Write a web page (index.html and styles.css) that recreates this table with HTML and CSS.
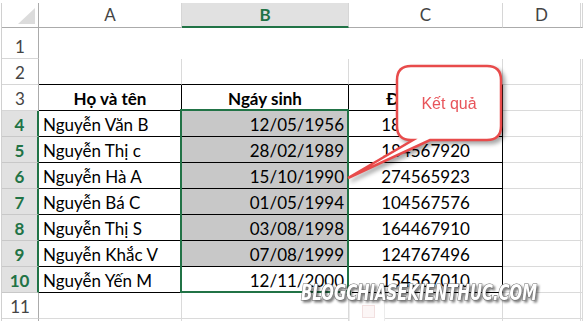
FILE: index.html
```html
<!DOCTYPE html>
<html>
<head>
<meta charset="utf-8">
<link rel="stylesheet" href="styles.css">
</head>
<body>
<div class="page">
  <div class="sheet">
    <div class="row hdr">
      <div class="corner"><span class="tri"></span></div>
      <div class="ch">A</div>
      <div class="ch sel">B</div>
      <div class="ch">C</div>
      <div class="ch">D</div>
      <div class="ch"></div>
    </div>
    <div class="row r1">
      <div class="rh">1</div>
      <div class="c blank"></div><div class="c blank"></div><div class="c blank"></div><div class="c blank"></div><div class="c blank"></div>
    </div>
    <div class="row">
      <div class="rh">2</div>
      <div class="c top"></div><div class="c top"></div><div class="c top"></div><div class="c"></div><div class="c"></div>
    </div>
    <div class="row">
      <div class="rh">3</div>
      <div class="c tb bold center">Họ và tên</div>
      <div class="c tb bold center">Ngáy sinh</div>
      <div class="c tb bold center">Điện thoại</div>
      <div class="c"></div><div class="c"></div>
    </div>
    <div class="row">
      <div class="rh sel">4</div>
      <div class="c tb name">Nguyễn Văn B</div>
      <div class="c tb date fill">12/05/1956</div>
      <div class="c tb center">184567890</div>
      <div class="c"></div><div class="c"></div>
    </div>
    <div class="row">
      <div class="rh sel">5</div>
      <div class="c tb name">Nguyễn Thị c</div>
      <div class="c tb date fill">28/02/1989</div>
      <div class="c tb center">184567920</div>
      <div class="c"></div><div class="c"></div>
    </div>
    <div class="row">
      <div class="rh sel">6</div>
      <div class="c tb name">Nguyễn Hà A</div>
      <div class="c tb date fill">15/10/1990</div>
      <div class="c tb center">274565923</div>
      <div class="c"></div><div class="c"></div>
    </div>
    <div class="row">
      <div class="rh sel">7</div>
      <div class="c tb name">Nguyễn Bá C</div>
      <div class="c tb date fill">01/05/1994</div>
      <div class="c tb center">104567576</div>
      <div class="c"></div><div class="c"></div>
    </div>
    <div class="row">
      <div class="rh sel">8</div>
      <div class="c tb name">Nguyễn Thị S</div>
      <div class="c tb date fill">03/08/1998</div>
      <div class="c tb center">164467910</div>
      <div class="c"></div><div class="c"></div>
    </div>
    <div class="row">
      <div class="rh sel">9</div>
      <div class="c tb name">Nguyễn Khắc V</div>
      <div class="c tb date fill">07/08/1999</div>
      <div class="c tb center">124767496</div>
      <div class="c"></div><div class="c"></div>
    </div>
    <div class="row">
      <div class="rh sel">10</div>
      <div class="c tb name">Nguyễn Yến M</div>
      <div class="c tb date">12/11/2000</div>
      <div class="c tb center">154567010</div>
      <div class="c"></div><div class="c"></div>
    </div>
    <div class="row">
      <div class="rh">11</div>
      <div class="c"></div><div class="c"></div><div class="c"></div><div class="c"></div><div class="c"></div>
    </div>
    <div class="row">
      <div class="rh"></div>
      <div class="c"></div><div class="c"></div><div class="c"></div><div class="c"></div><div class="c"></div>
    </div>
  </div>

  <div class="selection"><span class="handle"></span></div>

  <div class="qa"><span class="qa-icon"></span></div>

  <svg class="callout" width="180" height="130" viewBox="340 60 180 130">
    <path d="M411,66 H487 Q501,66 501,80 V126 Q501,140 487,140 H430 L348,178 L413,140 H411 Q397,140 397,126 V80 Q397,66 411,66 Z" fill="#fff" stroke="#e84b4b" stroke-width="2.5" stroke-linejoin="miter"/>
    <text x="449" y="109" text-anchor="middle" class="callout-text">Kết quả</text>
  </svg>

  <svg class="watermark" width="250" height="30" viewBox="0 0 250 30">
    <text x="3" y="22" textLength="236" lengthAdjust="spacingAndGlyphs" class="wm-text">BLOGCHIASEKIENTHUC.COM</text>
  </svg>
</div>
</body>
</html>
```
FILE: styles.css
```css
html, body {
  margin: 0;
  padding: 0;
  background: #fff;
}

.page {
  position: relative;
  width: 583px;
  height: 321px;
  overflow: hidden;
  padding-top: 3px;
  box-sizing: border-box;
  font-family: Lato, "Noto Sans", sans-serif;
  font-size: 17px;
  color: #000;
}

.sheet {
  margin-left: 1px;
  border-left: 1px solid #d0d0d0;
}

.row {
  display: grid;
  grid-template-columns: 37px 143px 167px 154px 78px 1fr;
  height: 26px;
}

.row.hdr { height: 25px; }
.row.r1 { height: 31px; }

.row > div {
  box-sizing: border-box;
  display: flex;
  align-items: flex-end;
  line-height: 20px;
  padding-bottom: 1px;
  white-space: nowrap;
  overflow: hidden;
}

/* column headers */
.corner {
  position: relative;
  border-right: 1px solid #ababab;
  border-bottom: 1px solid #ababab;
}
.tri {
  position: absolute;
  right: 3px;
  bottom: 3px;
  width: 0;
  height: 0;
  border-left: 17px solid transparent;
  border-bottom: 16px solid #dcdcdc;
}

.row > .ch {
  align-items: center;
  justify-content: center;
  padding-bottom: 0;
  color: #444;
  border-right: 1px solid #d6d6d6;
  border-bottom: 1px solid #ababab;
}
.row > .ch.sel {
  background: #e1e1e1;
  color: #217346;
  font-weight: 700;
  border-bottom: 2px solid #217346;
  padding-top: 1px;
}

/* row headers */
.row > .rh {
  justify-content: center;
  color: #444;
  border-right: 1px solid #ababab;
  border-bottom: 1px solid #d6d6d6;
}
.row > .rh.sel {
  background: #e1e1e1;
  color: #217346;
  font-weight: 700;
  border-right: 2px solid #217346;
  border-bottom-color: #c8c8c8;
}

/* cells */
.c {
  border-right: 1px solid #dadada;
  border-bottom: 1px solid #dadada;
}
.row > .c.blank {
  border-color: transparent;
}
.row > .c.top {
  border-bottom-color: #000;
}
.row > .c.tb {
  border-right-color: #000;
  border-bottom-color: #000;
}
.row > .c.fill {
  background: #c8c8c8;
}
.row > .bold { font-weight: 700; }
.row > .center { justify-content: center; }
.row > .name { padding-left: 4px; }
.row > .date { justify-content: flex-end; padding-right: 4px; }

/* selection overlay */
.selection {
  position: absolute;
  left: 180px;
  top: 109px;
  width: 169px;
  height: 184px;
  box-sizing: border-box;
  border: 2px solid #217346;
}
.handle {
  position: absolute;
  right: -5px;
  bottom: -5px;
  width: 5px;
  height: 5px;
  background: #217346;
  border: 1px solid #fff;
}

/* quick analysis ghost button */
.qa {
  position: absolute;
  left: 349px;
  top: 300px;
  width: 36px;
  height: 30px;
  box-sizing: border-box;
  border: 1px solid #ececec;
  background: #fff;
}
.qa-icon {
  position: absolute;
  left: 12px;
  top: 4px;
  width: 11px;
  height: 11px;
  border: 1px solid #f2e0e0;
  background: #fcf6f6;
}

/* callout */
.callout {
  position: absolute;
  left: 340px;
  top: 60px;
  filter: drop-shadow(3px 3px 2px rgba(0, 0, 0, 0.35));
}
.callout-text {
  font-family: "Liberation Sans", Arial, sans-serif;
  font-size: 16px;
  fill: #e8545a;
}

/* watermark */
.watermark {
  position: absolute;
  left: 298px;
  top: 278px;
  filter: drop-shadow(2px 2px 1px rgba(0, 0, 0, 0.5));
}
.wm-text {
  font-family: "DejaVu Sans Condensed", "DejaVu Sans", sans-serif;
  font-weight: 700;
  font-style: oblique;
  font-size: 21px;
  fill: #fff;
  stroke: #6d6d6d;
  stroke-width: 1.2;
  paint-order: stroke;
}
```
